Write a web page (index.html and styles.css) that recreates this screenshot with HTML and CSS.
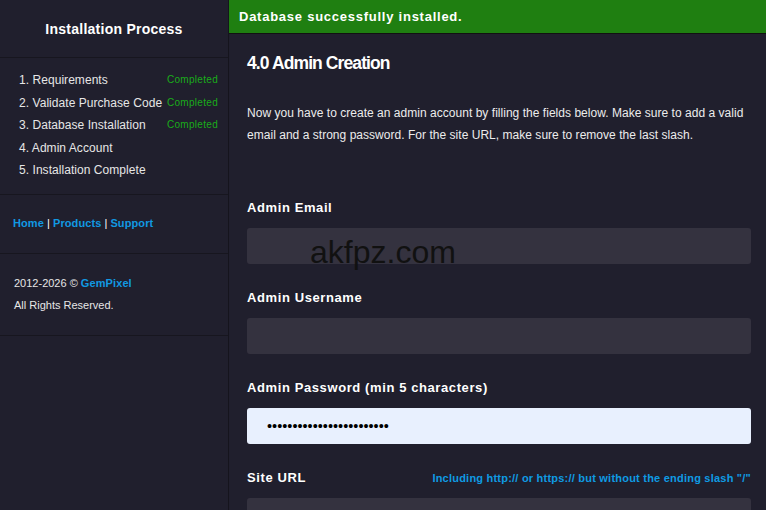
FILE: index.html
```html
<!DOCTYPE html>
<html lang="en">
<head>
  <meta charset="UTF-8">
  <title>Installation - Admin Account</title>
  <link rel="stylesheet" href="styles.css">
</head>
<body>
  <div class="wrap">
    <div class="sidebar">
      <div class="side-head">
        <h2>Installation Process</h2>
      </div>
      <ul class="steps">
        <li><span>1. Requirements</span><span class="done">Completed</span></li>
        <li><span>2. Validate Purchase Code</span><span class="done">Completed</span></li>
        <li><span>3. Database Installation</span><span class="done">Completed</span></li>
        <li><span>4. Admin Account</span></li>
        <li><span>5. Installation Complete</span></li>
      </ul>
      <div class="side-links">
        <a href="#">Home</a> | <a href="#">Products</a> | <a href="#">Support</a>
      </div>
      <div class="side-copy">
        <p>2012-2026 &copy; <a href="#">GemPixel</a></p>
        <p>All Rights Reserved.</p>
      </div>
    </div>

    <div class="main">
      <div class="alert">Database successfully installed.</div>
      <div class="content">
        <h3>4.0 Admin Creation</h3>
        <p class="intro">Now you have to create an admin account by filling the fields below. Make sure to add a valid email and a strong password. For the site URL, make sure to remove the last slash.</p>

        <form class="fields">
          <div class="field">
            <label for="email">Admin Email</label>
            <input type="email" id="email">
          </div>
          <div class="field">
            <label for="username">Admin Username</label>
            <input type="text" id="username">
          </div>
          <div class="field">
            <label for="password">Admin Password (min 5 characters)</label>
            <input type="password" id="password" class="filled" value="........................">
          </div>
          <div class="field">
            <div class="label-row">
              <label for="url">Site URL</label>
              <span class="hint">Including http:// or https:// but without the ending slash "/"</span>
            </div>
            <input type="text" id="url">
          </div>
        </form>
      </div>
    </div>
  </div>

  <div class="stamp">akfpz.com</div>
</body>
</html>
```

FILE: styles.css
```css
body { margin: 0; background: #201f2d; color: #f2f2f2; font-family: "Liberation Sans", Arial, sans-serif; }
a { color: #1199e2; font-weight: bold; text-decoration: none; letter-spacing: 0.1px; }

.wrap { display: flex; min-height: 100vh; }

/* left column */
.sidebar { width: 228px; flex-shrink: 0; border-right: 1px solid #15141d; }
.side-head { height: 57px; display: flex; align-items: center; justify-content: center; border-bottom: 1px solid #17161f; }
.side-head h2 { margin: 0; font-size: 14px; font-weight: bold; letter-spacing: 0.25px; color: #fff; }
.steps { list-style: none; margin: 0; padding: 11px 10px 12px 19px; border-bottom: 1px solid #17161f; font-size: 12px; }
.steps li { display: flex; justify-content: space-between; align-items: center; line-height: 22.5px; color: #e6e6e6; letter-spacing: 0.05px; }
.steps .done { font-size: 10px; letter-spacing: 0.3px; color: #1aac1a; }
.side-links { padding: 19px 13px 21px; font-size: 11px; line-height: 18px; border-bottom: 1px solid #17161f; color: #fff; }
.side-copy { padding: 18px 14px 19px; font-size: 11px; border-bottom: 1px solid #17161f; }
.side-copy p { margin: 0; line-height: 22px; color: #e6e6e6; }

/* right column */
.main { flex: 1; }
.alert { height: 33px; line-height: 33px; padding-left: 10px; background: #1f7f11; border-bottom: 1px solid #111; font-size: 13px; font-weight: bold; letter-spacing: 0.75px; color: #fff; }
.content { padding: 19px 15px 18px 18px; }
.content h3 { margin: 0; font-size: 17.5px; font-weight: bold; letter-spacing: -0.9px; line-height: 20px; color: #fff; }
.intro { margin: 29px 0 53px; font-size: 12px; line-height: 22px; letter-spacing: 0.03px; color: #ececec; }

.field { margin-bottom: 25px; }
.field label { display: block; margin-bottom: 11px; font-size: 13px; font-weight: bold; letter-spacing: 0.6px; line-height: 18px; color: #fff; }
.label-row { display: flex; justify-content: space-between; align-items: center; margin-bottom: 11px; }
.label-row label { margin-bottom: 0; }
.hint { font-size: 11px; font-weight: bold; letter-spacing: 0.22px; color: #0f9be3; }
.field input { display: block; box-sizing: border-box; width: 100%; height: 36px; padding: 0 20px; border: 0; border-radius: 3px; background: #34323f; color: #fff; font-family: inherit; font-size: 14.5px; outline: none; }
.field input.filled { background: #e8f0fe; color: #000; }

/* overlay text across the first input */
.stamp { position: absolute; left: 310px; top: 236px; font-size: 32px; line-height: 32px; color: #111; pointer-events: none; }
```
